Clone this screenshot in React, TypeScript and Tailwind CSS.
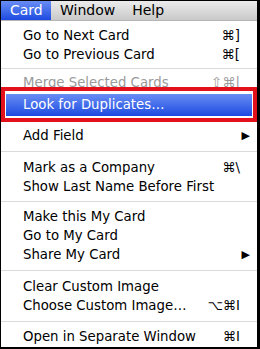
import React from "react";

type Item =
  | { label: string; key?: string; sub?: boolean; dim?: boolean; hi?: boolean }
  | { sep: number };

const items: Item[] = [
  { label: "Go to Next Card", key: "⌘]" },
  { label: "Go to Previous Card", key: "⌘[" },
  { sep: 9 },
  { label: "Merge Selected Cards", key: "⇧⌘|", dim: true },
  { label: "Look for Duplicates…", hi: true },
  { sep: 10 },
  { label: "Add Field", sub: true },
  { sep: 13 },
  { label: "Mark as a Company", key: "⌘\\" },
  { label: "Show Last Name Before First" },
  { sep: 11 },
  { label: "Make this My Card" },
  { label: "Go to My Card" },
  { label: "Share My Card", sub: true },
  { sep: 13 },
  { label: "Clear Custom Image" },
  { label: "Choose Custom Image…", key: "⌥⌘I" },
  { sep: 12 },
  { label: "Open in Separate Window", key: "⌘I" },
];

function Row({ item }: { item: { label: string; key?: string; sub?: boolean; dim?: boolean; hi?: boolean } }) {
  return (
    <div
      className={
        "flex items-center " +
        (item.hi
          ? "h-[22px] mt-[2px] mx-[5px] pl-[17px] pr-[12px] bg-gradient-to-b from-[#6a8cf4] to-[#1d48e0] text-white"
          : "h-[19px] pl-[22px] pr-[17px]") +
        (item.dim ? " text-[#9a9a9a]" : item.hi ? "" : " text-black")
      }
    >
      <span className="flex-1 whitespace-nowrap">{item.label}</span>
      {item.key && <span className="whitespace-nowrap">{item.key}</span>}
      {item.sub && <span className="text-[11px] mr-[-10px]">▶</span>}
    </div>
  );
}

export default function App() {
  return (
    <div
      className="relative w-[260px] h-[349px] overflow-hidden bg-white border-l border-t border-b-2 border-r-[3px] border-black"
      style={{ fontFamily: '"DejaVu Sans", "Liberation Sans", sans-serif' }}
    >
      {/* menu bar */}
      <div className="flex h-[20px] items-center text-[14px] bg-gradient-to-b from-[#ececec] to-[#c9c9c9] border-b border-[#b5b5b5]">
        <div className="h-full flex items-center px-[9px] w-[50px] bg-gradient-to-b from-[#6a8cf4] to-[#1d48e0] text-white">
          Card
        </div>
        <div className="ml-[9px] text-black">Window</div>
        <div className="ml-[17px] text-black">Help</div>
      </div>

      {/* menu */}
      <div className="pt-[5px] text-[13.3px] leading-none">
        {items.map((it, i) =>
          "sep" in it ? (
            <div key={i} style={{ height: it.sep }} className="flex items-center">
              <div className="w-full h-px bg-[#dadada]" />
            </div>
          ) : (
            <Row key={i} item={it} />
          )
        )}
      </div>

      {/* annotation box */}
      <div className="absolute left-0 top-[86px] w-[256px] h-[35px] border-[4px] border-[#e3111b]" />
    </div>
  );
}
